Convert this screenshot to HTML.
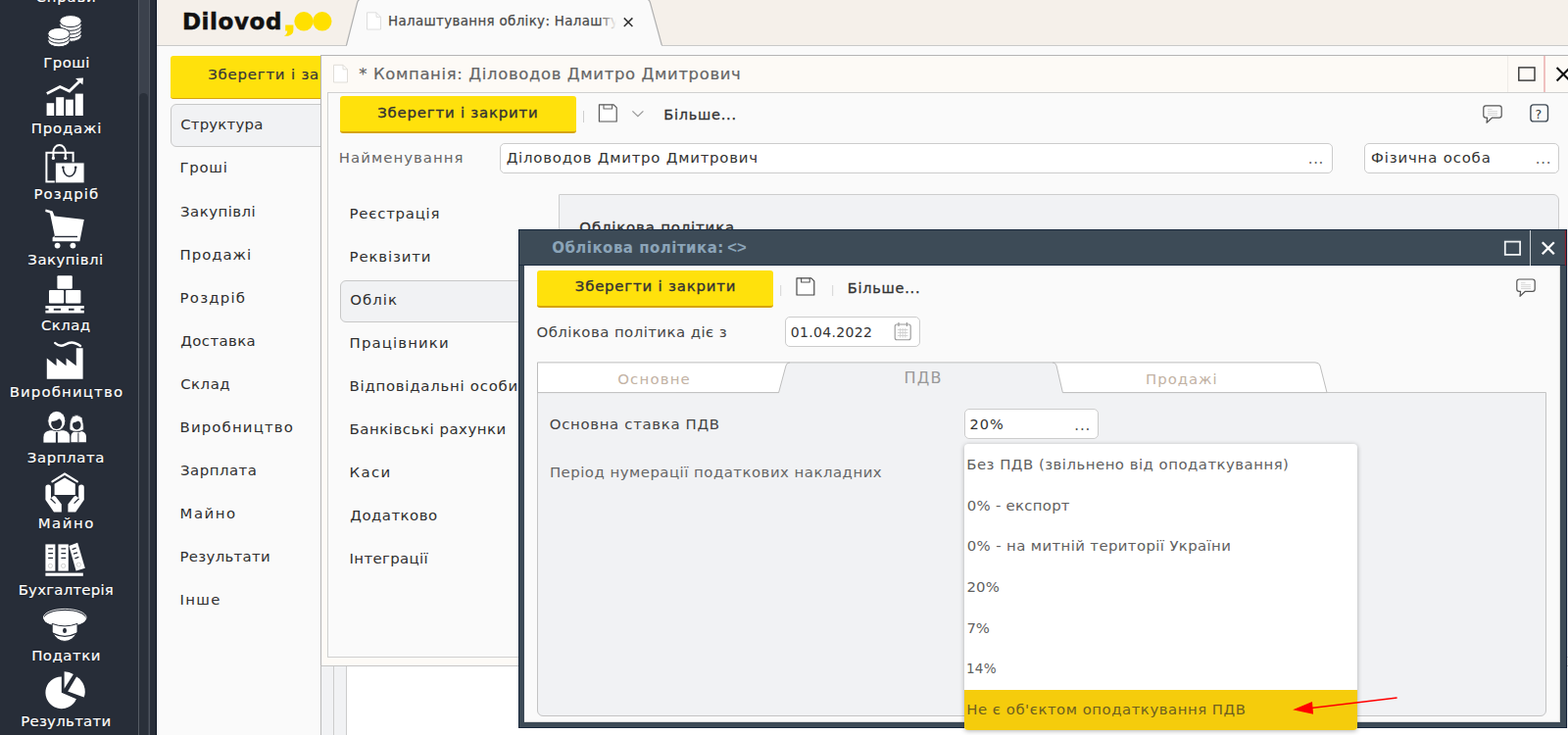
<!DOCTYPE html>
<html lang="uk">
<head>
<meta charset="utf-8">
<title>Dilovod</title>
<style>
html,body{margin:0;padding:0}
body{width:1600px;height:750px;overflow:hidden;position:relative;background:#fafafa;font-family:"DejaVu Sans","Liberation Sans",sans-serif}
.a{position:absolute;box-sizing:border-box}
.t{position:absolute;white-space:pre;line-height:80px;height:80px;margin:0;padding:0}
#side{left:0;top:0;width:160px;height:750px;background:#272d38}
#track{left:141px;top:0;width:12px;height:750px;background:#3b414c;border-left:1px solid #555b64;border-right:1px solid #4f555f}
#thumb{left:142.4px;top:95px;width:8.8px;height:670px;background:#2a303a;border-radius:5px}
#top{left:160px;top:0;width:1440px;height:47px;background:#f5f0ea;border-bottom:1px solid #c9c9c9}
.ybtn{background:#ffe10c;border-bottom:2px solid #d6a40e;border-radius:3px}
.sel{background:#f1f2f4;border:1px solid #c8c8c8;border-radius:6px}
.inp{background:#fff;border:1px solid #ccc;border-radius:5px}
</style>
</head>
<body>
<div class="a" id="side"></div>
<div class="a" id="track"></div>
<div class="a" id="thumb"></div>
<svg class="a" style="left:0;top:0" width="160" height="750" viewBox="0 0 160 750" fill="#fff">
<!-- coins -->
<g stroke="#272d38" stroke-width="1">
<ellipse cx="72" cy="36.4" rx="11.2" ry="6"/><ellipse cx="72" cy="32.7" rx="11.2" ry="6"/><ellipse cx="72" cy="29" rx="11.2" ry="6"/><ellipse cx="72" cy="25.3" rx="11.2" ry="6"/><ellipse cx="72" cy="21.6" rx="11.2" ry="6"/>
<ellipse cx="60" cy="41.8" rx="11.2" ry="6"/><ellipse cx="60" cy="38.1" rx="11.2" ry="6"/><ellipse cx="60" cy="34.4" rx="11.2" ry="6"/>
</g>
<!-- chart -->
<rect x="47.6" y="105.2" width="7.6" height="12.8"/><rect x="57.2" y="99.2" width="8" height="18.8"/><rect x="67" y="101.6" width="7.8" height="16.4"/><rect x="76.8" y="95.6" width="8" height="22.4"/>
<path d="M47.8 95.6 L61.2 88.6 L70.8 93 L81.6 82.6" fill="none" stroke="#fff" stroke-width="2.8"/>
<path d="M77 80 L85 79.4 L84.4 86.6 Z"/>
<!-- bags -->
<rect x="47.4" y="155.8" width="27.2" height="29.6" fill="none" stroke="#fff" stroke-width="2"/>
<path d="M54.4 161.2 V155 A6.2 7 0 0 1 66.8 155 V161.2" fill="none" stroke="#fff" stroke-width="2" stroke-linecap="round"/>
<circle cx="54.4" cy="161.4" r="1.6"/><circle cx="66.8" cy="161.4" r="1.6"/>
<rect x="56.3" y="165.9" width="29.8" height="21" stroke="#272d38" stroke-width="1"/>
<path d="M64.4 171 A6.4 9 0 0 0 77.2 171" fill="none" stroke="#272d38" stroke-width="1.6" stroke-linecap="round"/>
<circle cx="64.4" cy="170.8" r="1.3" fill="#272d38"/><circle cx="77.2" cy="170.8" r="1.3" fill="#272d38"/>
<!-- cart -->
<path d="M46.6 213.6 L53.6 215.6 L55.6 220.4 L85.8 224 L81.4 246.2 L53.6 246.2 L53.6 242.6 L55.8 240.4 L51 217.6 L46.2 216 Z"/>
<path d="M55.6 241.5 H79" stroke="#272d38" stroke-width="1.4" fill="none"/>
<circle cx="58.6" cy="250.6" r="2.9"/><circle cx="74.4" cy="250.6" r="2.9"/>
<!-- boxes -->
<rect x="58.4" y="281.2" width="15.4" height="13.6" rx="1"/><rect x="50" y="296" width="15.2" height="13.6" rx="1"/><rect x="67" y="296" width="15.4" height="13.6" rx="1"/>
<path d="M46.4 312 H85.8 V314.8 H82.4 V316.8 H85.8 V319.6 H46.4 V316.8 H49.6 V314.8 H46.4 Z M54.8 314.8 H62 V316.8 H54.8 Z M70 314.8 H75.6 V316.8 H70 Z" fill-rule="evenodd"/>
<!-- factory -->
<path d="M47.8 386.8 V365.6 L57.6 373.2 V365.6 L67.6 373.2 V365.6 L77.8 373.2 V355.2 H84.6 V386.8 Z"/>
<path d="M56.2 350 Q61 354.6 66.5 351.6 T76 350 T82 353" fill="none" stroke="#fff" stroke-width="2.4" stroke-linecap="round"/>
<!-- people -->
<path d="M72.4 451.2 V446 Q72.4 441 77 440 L80 441.6 L83 440 Q88 441 88 446 V451.2 Z"/>
<path d="M71 438.5 Q70.2 424 78.2 423.6 Q85.6 424 85.4 438.5 Q82 440.5 78.2 440.4 Q74 440.5 71 438.5 Z" stroke="#272d38" stroke-width="0.8"/>
<ellipse cx="78.3" cy="433.8" rx="4.3" ry="4.6" fill="#272d38"/>
<path d="M73.5 431.5 Q79 431 81.5 427.5 Q82 430.5 83.5 432 L83.5 426 L74 425.5 Z"/>
<path d="M79.9 442 V451.2" stroke="#272d38" stroke-width="1" fill="none"/>
<path d="M44 452 V446 Q44 440 51 438.8 H65 Q71.6 440 71.6 446 V452 Z" stroke="#272d38" stroke-width="0.8"/>
<ellipse cx="57.8" cy="429.6" rx="9" ry="10.2" stroke="#272d38" stroke-width="0.9"/>
<ellipse cx="57.7" cy="432.2" rx="5.5" ry="5.8" fill="#272d38"/>
<path d="M51.5 430 Q59 430 61.5 425.5 Q62.5 428 64.5 430.5 L64.5 423 L51.5 423 Z"/>
<path d="M57.9 441 V452" stroke="#272d38" stroke-width="2" fill="none"/>
<!-- hands/house -->
<path d="M53.4 491.4 L66 483.5 L78.8 491.4" fill="none" stroke="#fff" stroke-width="2.2" stroke-linecap="round"/>
<path d="M55.6 505 V493.8 L66 487.4 L76.8 493.8 V505 Z"/>
<g><path d="M46.4 497.4 Q46.4 494.6 49.2 494.6 Q52 494.6 52 497.4 V508 L54 506.4 Q55.5 505.6 57 507 L62.8 514.6 V522.4 H55 L46.4 510 Z"/>
<path d="M51.6 508.8 L56.6 513.6" stroke="#272d38" stroke-width="1.3" fill="none"/></g>
<g transform="translate(132.2 0) scale(-1 1)"><path d="M46.4 497.4 Q46.4 494.6 49.2 494.6 Q52 494.6 52 497.4 V508 L54 506.4 Q55.5 505.6 57 507 L62.8 514.6 V522.4 H55 L46.4 510 Z"/>
<path d="M51.6 508.8 L56.6 513.6" stroke="#272d38" stroke-width="1.3" fill="none"/></g>
<!-- binders -->
<rect x="46.4" y="555.4" width="10" height="27.2"/><rect x="59.4" y="555.4" width="10.4" height="27.2"/>
<path d="M70.4 557 L79.2 553.8 L86.8 579.8 L77.6 582.6 Z"/>
<g stroke="#272d38" stroke-width="1.3" fill="none"><path d="M49.2 559.8 H54 M49.2 564.6 H54 M49.2 569.4 H54 M62.4 559.8 H67.2 M62.4 564.6 H67.2 M62.4 569.4 H67.2 M73.6 560.6 L77.6 559.2 M75 565.2 L79 563.8 M76.4 569.8 L80.4 568.4"/></g>
<g stroke="#c9c9c9" stroke-width="0.9" fill="none"><circle cx="51.4" cy="577.4" r="2.1"/><circle cx="64.6" cy="577.4" r="2.1"/><circle cx="80.4" cy="576.2" r="2.1"/></g>
<rect x="46.4" y="584.6" width="38.4" height="3.2"/>
<!-- cap -->
<ellipse cx="66.2" cy="630" rx="21.8" ry="8.6" fill="none" stroke="#fff" stroke-width="0.9"/>
<ellipse cx="66.2" cy="631.2" rx="21.4" ry="8.2"/>
<path d="M53.2 636.4 Q66 641.4 79 636.4 V645 Q74 654.4 66 654.4 Q58 654.4 53.2 645 Z" stroke="#272d38" stroke-width="1"/>
<path d="M53.6 646.2 Q66 652.4 78.6 646.2" fill="none" stroke="#272d38" stroke-width="1.3"/>
<ellipse cx="66" cy="643.4" rx="2" ry="2.6" fill="#272d38"/>
<!-- pie -->
<path d="M62.8 706.8 L62.8 690.4 A16.4 16.4 0 1 0 77.9 713.2 Z"/>
<path d="M69.2 705.6 L78.1 690.5 A17.5 17.5 0 0 1 85.7 711.5 Z"/>
<path d="M65.6 702.8 L65.6 685.2 A17.6 17.6 0 0 1 74.9 687.9 Z"/>
</svg>

<div class="a" id="top"></div>
<!-- tab -->
<svg class="a" style="left:160px;top:0" width="560" height="48" viewBox="160 0 560 48">
<path d="M353.4 46.5 L364.6 2.5 Q365.6 -1 369 -1 L659 -1 Q662.4 -1 663.4 2.5 L675.4 46.5" fill="#fafafa" stroke="#b2b2b2" stroke-width="1.2"/>
<rect x="354" y="46" width="321" height="2" fill="#fafafa"/>
<!-- logo comma and circles -->
<path d="M291.2 25.6 H299.4 V30.6 Q299.4 35.4 294 36.8 H289.8 Q293.4 34.6 293.2 31.4 H291.2 Z" fill="#ffe000"/>
<circle cx="310" cy="21.8" r="9.7" fill="#ffe000"/><circle cx="328.8" cy="21.8" r="9.7" fill="#ffe000"/>
<!-- doc icon -->
<path d="M374.5 12.8 H384 L388.5 17.3 V30 H374.5 Z" fill="#fff" stroke="#dedede" stroke-width="1"/>
<path d="M384 12.8 V17.3 H388.5" fill="none" stroke="#dedede" stroke-width="1"/>
<!-- close -->
<path d="M636.8 18.4 L645.4 27 M645.4 18.4 L636.8 27" stroke="#333" stroke-width="1.5" fill="none"/>
</svg>
<div class="a" style="left:158.9px;top:0;width:1.5px;height:750px;background:#0a1222"></div>
<!-- main panel -->
<div class="a ybtn" style="left:173.5px;top:57px;width:260px;height:43.5px;border-bottom-width:1.6px"></div>
<div class="a sel" style="left:174px;top:105.6px;width:200px;height:44px"></div>

<span class="t" style="left:36.52px;top:-43.00px;font-size:14.9px;color:#ffffff;letter-spacing:0.823px;text-shadow:0 0 1.5px rgba(0,0,0,.9);-webkit-text-stroke:0.2px #ffffff;">Справи</span>
<span class="t" style="left:44.14px;top:24.00px;font-size:14.9px;color:#ffffff;letter-spacing:0.490px;text-shadow:0 0 1.5px rgba(0,0,0,.9);-webkit-text-stroke:0.2px #ffffff;">Гроші</span>
<span class="t" style="left:31.74px;top:91.00px;font-size:14.9px;color:#ffffff;letter-spacing:0.800px;text-shadow:0 0 1.5px rgba(0,0,0,.9);-webkit-text-stroke:0.2px #ffffff;">Продажі</span>
<span class="t" style="left:34.45px;top:158.00px;font-size:14.9px;color:#ffffff;letter-spacing:1.132px;text-shadow:0 0 1.5px rgba(0,0,0,.9);-webkit-text-stroke:0.2px #ffffff;">Роздріб</span>
<span class="t" style="left:28.32px;top:225.00px;font-size:14.9px;color:#ffffff;letter-spacing:0.518px;text-shadow:0 0 1.5px rgba(0,0,0,.9);-webkit-text-stroke:0.2px #ffffff;">Закупівлі</span>
<span class="t" style="left:42.02px;top:292.00px;font-size:14.9px;color:#ffffff;letter-spacing:0.449px;text-shadow:0 0 1.5px rgba(0,0,0,.9);-webkit-text-stroke:0.2px #ffffff;">Склад</span>
<span class="t" style="left:9.65px;top:360.00px;font-size:14.9px;color:#ffffff;letter-spacing:1.160px;text-shadow:0 0 1.5px rgba(0,0,0,.9);-webkit-text-stroke:0.2px #ffffff;">Виробництво</span>
<span class="t" style="left:27.82px;top:427.00px;font-size:14.9px;color:#ffffff;letter-spacing:0.613px;text-shadow:0 0 1.5px rgba(0,0,0,.9);-webkit-text-stroke:0.2px #ffffff;">Зарплата</span>
<span class="t" style="left:38.64px;top:494.00px;font-size:14.9px;color:#ffffff;letter-spacing:1.550px;text-shadow:0 0 1.5px rgba(0,0,0,.9);-webkit-text-stroke:0.2px #ffffff;">Майно</span>
<span class="t" style="left:18.65px;top:562.00px;font-size:14.9px;color:#ffffff;letter-spacing:0.242px;text-shadow:0 0 1.5px rgba(0,0,0,.9);-webkit-text-stroke:0.2px #ffffff;">Бухгалтерія</span>
<span class="t" style="left:32.14px;top:629.00px;font-size:14.9px;color:#ffffff;letter-spacing:0.525px;text-shadow:0 0 1.5px rgba(0,0,0,.9);-webkit-text-stroke:0.2px #ffffff;">Податки</span>
<span class="t" style="left:21.15px;top:696.00px;font-size:14.9px;color:#ffffff;letter-spacing:0.304px;text-shadow:0 0 1.5px rgba(0,0,0,.9);-webkit-text-stroke:0.2px #ffffff;">Результати</span>
<span class="t" style="left:184.20px;top:87.00px;font-size:14.9px;color:#2f2f2f;letter-spacing:0.210px;">Структура</span>
<span class="t" style="left:183.58px;top:131.00px;font-size:14.9px;color:#2f2f2f;letter-spacing:0.706px;">Гроші</span>
<span class="t" style="left:184.10px;top:176.00px;font-size:14.9px;color:#2f2f2f;letter-spacing:0.470px;">Закупівлі</span>
<span class="t" style="left:183.58px;top:220.00px;font-size:14.9px;color:#2f2f2f;letter-spacing:0.973px;">Продажі</span>
<span class="t" style="left:183.58px;top:264.00px;font-size:14.9px;color:#2f2f2f;letter-spacing:1.230px;">Роздріб</span>
<span class="t" style="left:184.31px;top:308.00px;font-size:14.9px;color:#2f2f2f;letter-spacing:0.394px;">Доставка</span>
<span class="t" style="left:184.20px;top:352.00px;font-size:14.9px;color:#2f2f2f;letter-spacing:0.522px;">Склад</span>
<span class="t" style="left:183.58px;top:396.00px;font-size:14.9px;color:#2f2f2f;letter-spacing:1.144px;">Виробництво</span>
<span class="t" style="left:184.10px;top:440.00px;font-size:14.9px;color:#2f2f2f;letter-spacing:0.481px;">Зарплата</span>
<span class="t" style="left:183.58px;top:484.00px;font-size:14.9px;color:#2f2f2f;letter-spacing:1.502px;">Майно</span>
<span class="t" style="left:183.58px;top:528.00px;font-size:14.9px;color:#2f2f2f;letter-spacing:0.299px;">Результати</span>
<span class="t" style="left:183.58px;top:572.00px;font-size:14.9px;color:#2f2f2f;letter-spacing:1.274px;">Інше</span>
<span class="t" style="left:185.94px;top:-18.00px;font-size:23px;color:#111;font-weight:700;letter-spacing:0.584px;-webkit-text-stroke:0.5px #111;">Dilovod</span>
<span class="t" style="left:396.05px;top:-18.00px;font-size:13.4px;color:#4a4a4a;letter-spacing:0.350px;-webkit-text-stroke:0.25px #4a4a4a;">Налаштування обліку: Налашту</span>
<span class="t" style="left:212.19px;top:36.00px;font-size:14.9px;color:#383838;letter-spacing:0.810px;-webkit-text-stroke:0.2px #383838;">Зберегти і закрити</span>
<div class="a" style="left:612px;top:10px;width:20px;height:24px;background:linear-gradient(90deg,rgba(250,250,250,0),#fafafa 85%)"></div>
<!-- under company window -->
<div class="a" style="left:327px;top:678px;width:27.2px;height:72px;background:#f1f2f4;border-left:1px solid #bbb;border-right:1px solid #ccc"></div>
<div class="a" style="left:340px;top:678px;width:1px;height:72px;background:#ccc"></div>
<div class="a" style="left:354.2px;top:678px;width:1246px;height:72px;background:#fff"></div>

<!-- company window -->
<div class="a" id="cw" style="left:327px;top:56px;width:1290px;height:623.6px;background:#fdfaf6;border:1px solid #b5b5b5;border-bottom:1.2px solid #c6c6c6"></div>
<div class="a" style="left:334px;top:94px;width:1280px;height:577px;background:#fafafa;border:1px solid #d0d0d0"></div>
<div class="a ybtn" style="left:347px;top:98px;width:241px;height:38px"></div>
<div class="a inp" style="left:510px;top:146px;width:850px;height:31px"></div>
<div class="a inp" style="left:1392px;top:146px;width:199px;height:31px"></div>
<div class="a sel" style="left:347px;top:286px;width:200px;height:43px"></div>
<div class="a" style="left:569.5px;top:198px;width:1021.5px;height:300px;background:#f1f2f4;border:1px solid #cdcdcd;border-radius:1px 6px 6px 1px"></div>

<svg class="a" style="left:326px;top:56px" width="1274" height="100" viewBox="326 56 1274 100">
<!-- doc icon -->
<path d="M340.5 66.3 H350 L354.5 70.8 V84 H340.5 Z" fill="#fff" stroke="#e0ddd8" stroke-width="1"/>
<path d="M350 66.3 V70.8 H354.5" fill="none" stroke="#e0ddd8" stroke-width="1"/>
<!-- window controls -->
<path d="M1538.6 57 V94" stroke="#eeebe6" stroke-width="1"/>
<rect x="1549.8" y="68.9" width="16.2" height="13.2" fill="none" stroke="#333" stroke-width="1.4"/>
<path d="M1576 57 V94" stroke="#e9a3a3" stroke-width="1.3"/>
<path d="M1588.6 69 L1602 82.4 M1602 69 L1588.6 82.4" stroke="#111" stroke-width="2.1" fill="none"/>
<!-- toolbar -->
<path d="M595.5 113 V125" stroke="#cfcfcf" stroke-width="1"/>
<path d="M611.4 106.8 H626.2 L629.2 109.8 V124 H611.4 Z" fill="#fff" stroke="#555" stroke-width="1.15" stroke-linejoin="round"/><path d="M616 106.8 V111 H624.6 V106.8" fill="none" stroke="#666" stroke-width="1.1" stroke-linejoin="round"/>
<path d="M645.4 113.4 L650.9 118.6 L656.4 113.4" fill="none" stroke="#999" stroke-width="1.3"/>
<!-- comment -->
<path d="M1516.2 107.9 H1529.8 Q1532.2 107.9 1532.2 110.3 V117.8 Q1532.2 120.2 1529.8 120.2 H1522.4 L1517 125.2 L1517.6 120.2 H1516.2 Q1513.8 120.2 1513.8 117.8 V110.3 Q1513.8 107.9 1516.2 107.9 Z" fill="#fcfcfc" stroke="#555" stroke-width="1.2" stroke-linejoin="round"/>
<path d="M1518 111.6 H1522.5 M1518 113.6 H1528 M1518 115.6 H1528 M1518 117.4 H1528" stroke="#d8d8d8" stroke-width="1"/>
<!-- help -->
<rect x="1561.9" y="106.9" width="17.6" height="17" rx="3" fill="none" stroke="#3f4a55" stroke-width="1.4"/>
</svg>
<span class="t" style="left:366.22px;top:36.00px;font-size:16.4px;color:#666;letter-spacing:0.672px;-webkit-text-stroke:0.2px #666;">* Компанія: Діловодов Дмитро Дмитрович</span>
<span class="t" style="left:385.28px;top:75.00px;font-size:14.9px;color:#333;letter-spacing:0.802px;-webkit-text-stroke:0.35px #333;">Зберегти і закрити</span>
<span class="t" style="left:677.29px;top:77.00px;font-size:14.5px;color:#333;letter-spacing:0.741px;-webkit-text-stroke:0.3px #333;">Більше...</span>
<span class="t" style="left:345.78px;top:121.00px;font-size:14.9px;color:#666;letter-spacing:1.048px;">Найменування</span>
<span class="t" style="left:516.71px;top:121.00px;font-size:14.9px;color:#333;letter-spacing:0.785px;">Діловодов Дмитро Дмитрович</span>
<span class="t" style="left:1334.82px;top:122.00px;font-size:15px;color:#666;letter-spacing:0.615px;">...</span>
<span class="t" style="left:1399.08px;top:121.00px;font-size:14.9px;color:#333;letter-spacing:0.836px;">Фізична особа</span>
<span class="t" style="left:1566.82px;top:122.00px;font-size:15px;color:#666;letter-spacing:0.668px;">...</span>
<span class="t" style="left:356.58px;top:178.00px;font-size:14.9px;color:#2f2f2f;letter-spacing:0.765px;">Реєстрація</span>
<span class="t" style="left:356.58px;top:222.00px;font-size:14.9px;color:#2f2f2f;letter-spacing:0.869px;">Реквізити</span>
<span class="t" style="left:357.20px;top:266.00px;font-size:14.9px;color:#2f2f2f;letter-spacing:1.064px;">Облік</span>
<span class="t" style="left:356.58px;top:310.00px;font-size:14.9px;color:#2f2f2f;letter-spacing:1.130px;">Працівники</span>
<span class="t" style="left:356.58px;top:354.00px;font-size:14.9px;color:#2f2f2f;letter-spacing:0.753px;">Відповідальні особи</span>
<span class="t" style="left:356.58px;top:398.00px;font-size:14.9px;color:#2f2f2f;letter-spacing:0.546px;">Банківські рахунки</span>
<span class="t" style="left:356.58px;top:442.00px;font-size:14.9px;color:#2f2f2f;letter-spacing:1.349px;">Каси</span>
<span class="t" style="left:357.31px;top:486.00px;font-size:14.9px;color:#2f2f2f;letter-spacing:0.496px;">Додатково</span>
<span class="t" style="left:356.58px;top:530.00px;font-size:14.9px;color:#2f2f2f;letter-spacing:0.369px;">Інтеграції</span>
<span class="t" style="left:591.37px;top:192.00px;font-size:14.9px;color:#333;letter-spacing:0.842px;-webkit-text-stroke:0.35px #333;">Облікова політика</span>
<span class="t" style="left:1566.43px;top:77.00px;font-size:12.5px;color:#333;">?</span>
<!-- modal -->
<div class="a" id="md" style="left:528.6px;top:233.8px;width:1070.4px;height:509.2px;background:#3d4b57;border:1px solid #16263b;border-right:none"></div>
<div class="a" style="left:529.6px;top:270px;width:1069px;height:1px;background:#1d2d41"></div>
<div class="a" style="left:535px;top:271px;width:1057px;height:465.6px;background:#fafafa;border-right:1px solid #dcdcdc;border-bottom:1px solid #dcdcdc"></div>
<div class="a ybtn" style="left:548px;top:276px;width:241px;height:38px"></div>
<div class="a inp" style="left:801px;top:323px;width:138px;height:31px"></div>
<!-- tabs -->
<div class="a" style="left:548px;top:400px;width:1030px;height:331px;background:#f1f2f4;border:1px solid #c4c4c4;border-radius:0 0 6px 6px"></div>
<div class="a inp" style="left:984px;top:417px;width:137px;height:31px"></div>
<svg class="a" style="left:528px;top:234px" width="1072" height="516" viewBox="528 234 1072 516">
<!-- window controls -->
<rect x="1535.8" y="246.6" width="15.3" height="13.3" fill="none" stroke="#eef1f3" stroke-width="1.8"/>
<path d="M1561.5 235 V271" stroke="#c9ced3" stroke-width="1"/>
<path d="M1573.8 247.2 L1585.8 259.2 M1585.8 247.2 L1573.8 259.2" stroke="#fff" stroke-width="2.3" fill="none"/>
<path d="M1597.4 235 V271" stroke="#9c1c28" stroke-width="1"/><path d="M1598.6 234 V743" stroke="#0d1b33" stroke-width="1"/>
<!-- toolbar -->
<path d="M796.7 291 V302 M849.7 291 V302" stroke="#d4d4d4" stroke-width="1"/>
<path d="M813 283.8 H827.8 L830.8 286.8 V301 H813 Z" fill="#fff" stroke="#444" stroke-width="1.15" stroke-linejoin="round"/><path d="M817.6 283.8 V288 H826.2 V283.8" fill="none" stroke="#555" stroke-width="1.1" stroke-linejoin="round"/>
<!-- comment -->
<path d="M1550.2 285 H1563.8 Q1566.2 285 1566.2 287.4 V294.9 Q1566.2 297.3 1563.8 297.3 H1556.4 L1551 302.3 L1551.6 297.3 H1550.2 Q1547.8 297.3 1547.8 294.9 V287.4 Q1547.8 285 1550.2 285 Z" fill="#fcfcfc" stroke="#555" stroke-width="1.2" stroke-linejoin="round"/>
<path d="M1552 288.7 H1556.5 M1552 290.7 H1562 M1552 292.7 H1562 M1552 294.5 H1562" stroke="#d8d8d8" stroke-width="1"/>
<!-- calendar -->
<rect x="913.2" y="331" width="16" height="15.8" rx="2" fill="#fcfcfc" stroke="#999" stroke-width="1.1"/>
<path d="M917 329 V333 M925.4 329 V333" stroke="#999" stroke-width="1.2"/>
<path d="M916 336.5 H926.4 M916 339.5 H926.4 M916 342.5 H926.4 M918.6 335 V344.5 M921.2 335 V344.5 M923.8 335 V344.5" stroke="#cfcfcf" stroke-width="0.9"/>
<!-- tabs -->
<path d="M548.5 401 V369.9 H803 L794.6 400.6 Z" fill="#fff" stroke="none"/>
<path d="M1077 369.9 H1342 Q1346 369.9 1347 373 L1354 400.6 H1084.4 Z" fill="#fff"/>
<path d="M794.6 402 L802 373 Q803 369.9 806 369.9 H1074 Q1077 369.9 1078 373 L1085 402 Z" fill="#f1f2f4"/>
<path d="M548.5 401 V369.9 H1342 Q1346 369.9 1347 373 L1354 400.6" fill="none" stroke="#bdbdbd" stroke-width="1"/>
<path d="M548.5 400.6 H794.6 L802 373 Q803 369.9 806 369.9 M1074 369.9 Q1077 369.9 1078 373 L1084.4 400.6 H1354" fill="none" stroke="#bdbdbd" stroke-width="1"/>
</svg>
<span class="t" style="left:563.17px;top:213.00px;font-size:15px;color:#8ba4b8;font-weight:700;letter-spacing:0.481px;">Облікова політика:</span>
<span class="t" style="left:742.15px;top:212.00px;font-size:16.5px;color:#8ba4b8;font-weight:700;letter-spacing:0.227px;font-family:'Liberation Sans', sans-serif;">&lt;&gt;</span>
<span class="t" style="left:586.78px;top:252.00px;font-size:14.9px;color:#333;letter-spacing:0.816px;-webkit-text-stroke:0.35px #333;">Зберегти і закрити</span>
<span class="t" style="left:864.79px;top:254.00px;font-size:14.5px;color:#333;letter-spacing:0.741px;-webkit-text-stroke:0.3px #333;">Більше...</span>
<span class="t" style="left:547.50px;top:299.00px;font-size:14.9px;color:#444;letter-spacing:0.456px;">Облікова політика діє з</span>
<span class="t" style="left:806.67px;top:299.00px;font-size:14px;color:#333;letter-spacing:0.335px;">01.04.2022</span>
<span class="t" style="left:630.20px;top:347.00px;font-size:14.9px;color:#c2b2a4;letter-spacing:1.184px;">Основне</span>
<span class="t" style="left:922.45px;top:346.00px;font-size:16px;color:#999;letter-spacing:1.274px;">ПДВ</span>
<span class="t" style="left:1169.08px;top:347.00px;font-size:14.9px;color:#c2b2a4;letter-spacing:0.954px;">Продажі</span>
<span class="t" style="left:560.80px;top:393.00px;font-size:14.9px;color:#444;letter-spacing:0.670px;">Основна ставка ПДВ</span>
<span class="t" style="left:989.60px;top:393.00px;font-size:14.5px;color:#333;letter-spacing:0.974px;">20%</span>
<span class="t" style="left:1096.22px;top:394.00px;font-size:15px;color:#555;letter-spacing:0.911px;">...</span>
<span class="t" style="left:560.88px;top:442.00px;font-size:14.9px;color:#666;letter-spacing:0.498px;">Період нумерації податкових накладних</span>
<div class="a" style="left:984px;top:453px;width:401px;height:292px;background:#fff;border-radius:4px;box-shadow:0 1px 5px rgba(0,0,0,.3)"></div>
<div class="a" style="left:984px;top:704px;width:401px;height:41px;background:#f5cc0c;border-radius:0 0 4px 4px"></div>

<span class="t" style="left:986.18px;top:434.00px;font-size:14.9px;color:#5f5f5f;letter-spacing:0.489px;">Без ПДВ (звільнено від оподаткування)</span>
<span class="t" style="left:986.71px;top:476.00px;font-size:14.9px;color:#5f5f5f;letter-spacing:0.279px;">0% - експорт</span>
<span class="t" style="left:986.71px;top:517.00px;font-size:14.9px;color:#5f5f5f;letter-spacing:0.383px;">0% - на митній території України</span>
<span class="t" style="left:986.53px;top:559.00px;font-size:14.9px;color:#5f5f5f;letter-spacing:0.129px;">20%</span>
<span class="t" style="left:986.42px;top:601.00px;font-size:14.9px;color:#5f5f5f;letter-spacing:-0.215px;">7%</span>
<span class="t" style="left:985.96px;top:642.00px;font-size:13.6px;color:#5f5f5f;letter-spacing:0.191px;">14%</span>
<span class="t" style="left:986.18px;top:684.00px;font-size:14.9px;color:#6e6020;letter-spacing:0.517px;">Не є об'єктом оподаткування ПДВ</span>
<svg class="a" style="left:1300px;top:700px" width="140" height="40" viewBox="1300 700 140 40">
<path d="M1425.6 712 L1338 722.4" stroke="#ff0000" stroke-width="1.5" fill="none"/>
<path d="M1319.2 724.2 L1339 715.9 L1340.1 728.7 Z" fill="#ff0000"/>
</svg>

</body>
</html>
